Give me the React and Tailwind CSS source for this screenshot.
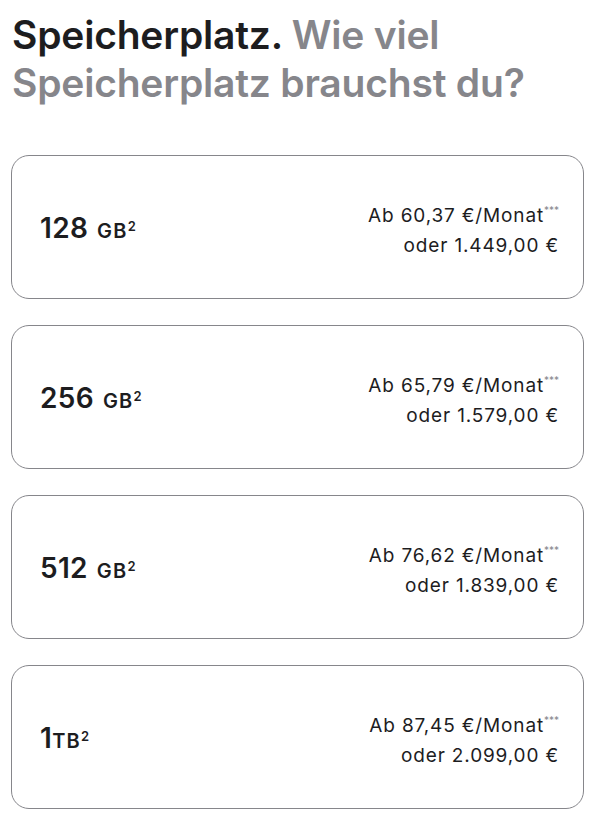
import React from "react";

const items = [
  { num: "128", unit: "GB", sp: true, month: "60,37", total: "1.449,00" },
  { num: "256", unit: "GB", sp: true, month: "65,79", total: "1.579,00" },
  { num: "512", unit: "GB", sp: true, month: "76,62", total: "1.839,00" },
  { num: "1", unit: "TB", sp: false, month: "87,45", total: "2.099,00" },
];

export default function App() {
  return (
    <div className="min-h-screen bg-white text-[#1d1d1f]" style={{ fontFamily: "Inter, 'Noto Sans', sans-serif" }}>
      <div className="pl-[12px] pr-[9px] pt-[11px]">
        <h2 className="text-[39px] leading-[48px] font-semibold tracking-[-0.2px]">
          Speicherplatz. <span className="text-[#86868b]">Wie viel Speicherplatz brauchst du?</span>
        </h2>
      </div>
      <div className="ml-[11px] mr-[9px] mt-[48px] flex flex-col gap-[26px]">
        {items.map((it) => (
          <div
            key={it.num}
            className="h-[144px] rounded-[18px] border border-[#86868b] pl-[28px] pr-[24px] flex items-center justify-between"
          >
            <div className="font-semibold text-[#1d1d1f] flex items-baseline mt-[2px]">
              <span className="text-[28px] tracking-[0.3px]">{it.num}</span>
              {it.sp && <span className="w-[9px]" />}
              <span className="text-[20px] tracking-[1.2px]">{it.unit}</span>
              <span className="text-[13px] relative -top-[7px]">2</span>
            </div>
            <div className="text-right text-[19px] leading-[28px] tracking-[0.85px] text-[#1d1d1f] mt-[8px]">
              <div>
                Ab {it.month} €/Monat<span className="text-[10px] tracking-normal text-[#86868b] relative -top-[8px]">***</span>
              </div>
              <div>oder {it.total} €</div>
            </div>
          </div>
        ))}
      </div>
    </div>
  );
}
